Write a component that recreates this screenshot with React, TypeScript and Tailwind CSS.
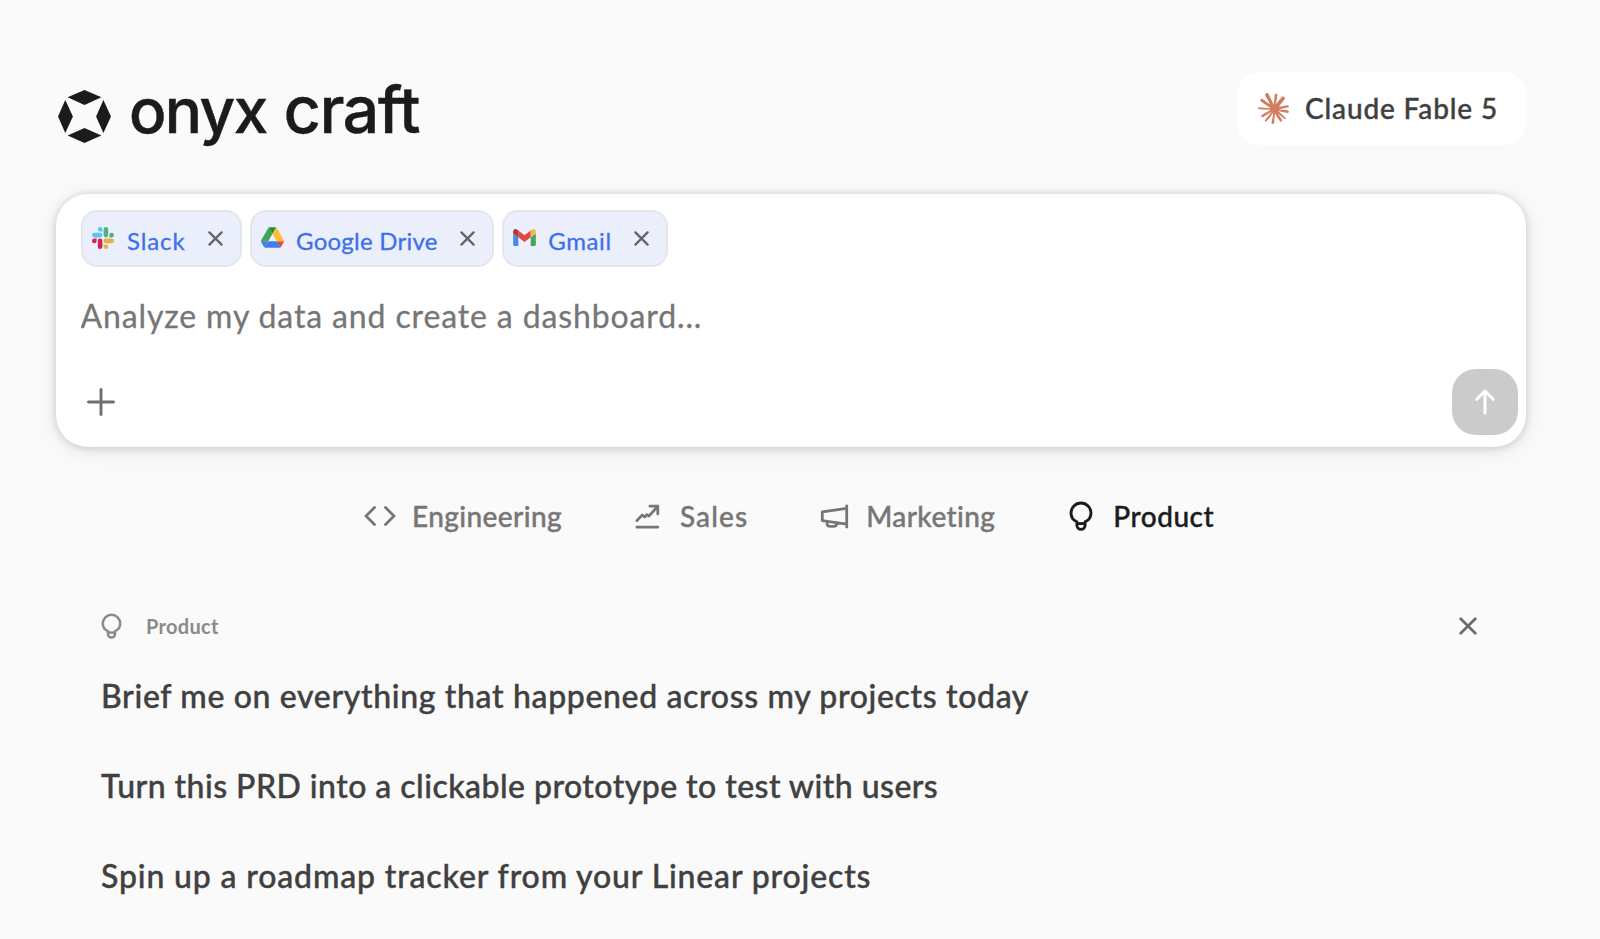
import { useState, type ReactNode } from 'react';

interface Connector {
  id: string;
  name: string;
  icon: ReactNode;
  tracking: string;
}

interface Category {
  id: string;
  label: string;
  icon: ReactNode;
  tracking: string;
}

function OnyxLogo() {
  return (
    <svg viewBox="54 59 160 160" className="w-[53px] h-[53px] shrink-0" fill="#1b1b1b">
      <path d="M134 59 185 81 134 104 83 81Z" />
      <path d="M191 89 214 139 191 189 169 139Z" />
      <path d="M134 174 185 196 134 219 83 196Z" />
      <path d="M76 89 99 139 76 189 54 139Z" />
    </svg>
  );
}

function ClaudeIcon() {
  return (
    <svg viewBox="0 0 24 24" className="w-[31px] h-[31px] shrink-0" fill="#d27d5f">
      <path d="m4.7144 15.9555 4.7174-2.6471.079-.2307-.079-.1275h-.2307l-.7893-.0486-2.6956-.0729-2.3375-.0971-2.2646-.1214-.5707-.1215-.5343-.7042.0546-.3522.4797-.3218.686.0608 1.5179.1032 2.2767.1578 1.6514.0972 2.4468.255h.3886l.0546-.1579-.1336-.0971-.1032-.0972L6.973 9.8356l-2.55-1.6879-1.3356-.9714-.7225-.4918-.3643-.4614-.1578-1.0078.6557-.7225.8803.0607.2246.0607.8925.686 1.9064 1.4754 2.4893 1.8336.3643.3035.1457-.1032.0182-.0728-.164-.2733-1.3539-2.4467-1.445-2.4893-.6435-1.032-.17-.6194c-.0607-.255-.1032-.4674-.1032-.7285L6.287.1335 6.6997 0l.9957.1336.419.3642.6192 1.4147 1.0018 2.2282 1.5543 3.0296.4553.8985.2429.8318.091.255h.1579v-.1457l.1275-1.706.2368-2.0947.2307-2.6957.0789-.7589.3764-.9107.7468-.4918.5828.2793.4797.686-.0668.4433-.2853 1.8517-.5586 2.9021-.3643 1.9429h.2125l.2429-.2429.9835-1.3053 1.6514-2.0643.7286-.8196.85-.9046.5464-.4311h1.0321l.759 1.1293-.34 1.1657-1.0625 1.3478-.8804 1.1414-1.2628 1.7-.7893 1.36.0729.1093.1882-.0183 2.8535-.607 1.5421-.2794 1.8396-.3157.8318.3886.091.3946-.3278.8075-1.967.4857-2.3072.4614-3.4364.8136-.0425.0304.0486.0607 1.5482.1457.6618.0364h1.621l3.0175.2247.7892.522.4736.6376-.079.4857-1.2142.6193-1.6393-.3886-3.825-.9107-1.3113-.3279h-.1822v.1093l1.0929 1.0686 2.0035 1.8092 2.5075 2.3314.1275.5768-.3218.4554-.34-.0486-2.2039-1.6575-.85-.7468-1.9246-1.621h-.1275v.17l.4432.6496 2.3436 3.5214.1214 1.0807-.17.3521-.6071.2125-.6679-.1214-1.3721-1.9246L14.38 17.959l-1.1414-1.9428-.1397.079-.674 7.2552-.3156.3703-.7286.2793-.6071-.4614-.3218-.7468.3218-1.4753.3886-1.9246.3157-1.53.2853-1.9004.17-.6314-.0121-.0425-.1397.0182-1.4328 1.9672-2.1796 2.9446-1.7243 1.8456-.4128.164-.7164-.3704.0667-.6618.4008-.5889 2.386-3.0357 1.4389-1.882.929-1.0868-.0062-.1579h-.0546l-6.3385 4.1164-1.1293.1457-.4857-.4554.0608-.7467.2307-.2429 1.9064-1.3114Z" />
    </svg>
  );
}

function SlackIcon() {
  return (
    <svg viewBox="0 0 24 24" className="w-[22px] h-[22px]">
      <path fill="#d1264f" d="M5.042 15.165a2.528 2.528 0 0 1-2.520 2.523A2.528 2.528 0 0 1 0 15.165a2.527 2.527 0 0 1 2.522-2.520h2.520v2.520zM6.313 15.165a2.527 2.527 0 0 1 2.521-2.520 2.527 2.527 0 0 1 2.521 2.520v6.313A2.528 2.528 0 0 1 8.834 24a2.528 2.528 0 0 1-2.521-2.522v-6.313z" />
      <path fill="#5bc3ee" d="M8.834 5.042a2.528 2.528 0 0 1-2.521-2.520A2.528 2.528 0 0 1 8.834 0a2.528 2.528 0 0 1 2.521 2.522v2.520H8.834zM8.834 6.313a2.528 2.528 0 0 1 2.521 2.521 2.528 2.528 0 0 1-2.521 2.521H2.522A2.528 2.528 0 0 1 0 8.834a2.528 2.528 0 0 1 2.522-2.521h6.312z" />
      <path fill="#52b080" d="M18.956 8.834a2.528 2.528 0 0 1 2.522-2.521A2.528 2.528 0 0 1 24 8.834a2.528 2.528 0 0 1-2.522 2.521h-2.522V8.834zM17.688 8.834a2.528 2.528 0 0 1-2.523 2.521 2.527 2.527 0 0 1-2.520-2.521V2.522A2.527 2.527 0 0 1 15.165 0a2.528 2.528 0 0 1 2.523 2.522v6.312z" />
      <path fill="#e6b04a" d="M15.165 18.956a2.528 2.528 0 0 1 2.523 2.522A2.528 2.528 0 0 1 15.165 24a2.527 2.527 0 0 1-2.520-2.522v-2.522h2.520zM15.165 17.688a2.527 2.527 0 0 1-2.520-2.523 2.526 2.526 0 0 1 2.520-2.520h6.313A2.527 2.527 0 0 1 24 15.165a2.528 2.528 0 0 1-2.522 2.523h-6.313z" />
    </svg>
  );
}

function DriveIcon() {
  return (
    <svg viewBox="0 0 87.3 78" className="w-[23px] h-[21px]">
      <path fill="#3f7de8" d="m6.600 66.850 3.850 6.650c.8 1.400 1.950 2.500 3.300 3.300l13.750-23.800h-27.500c0 1.550.4 3.100 1.200 4.500z" />
      <path fill="#43a455" d="m43.650 25-13.750-23.800c-1.350.8-2.500 1.900-3.300 3.300l-25.400 44a9.060 9.060 0 0 0-1.200 4.500h27.500z" />
      <path fill="#e5493a" d="m73.550 76.800c1.350-.8 2.500-1.900 3.300-3.300l1.600-2.750 7.650-13.250c.8-1.400 1.200-2.950 1.200-4.500h-27.502l5.852 11.500z" />
      <path fill="#2b8540" d="m43.650 25 13.750-23.800c-1.350-.8-2.900-1.200-4.500-1.200h-18.500c-1.600 0-3.150.45-4.500 1.200z" />
      <path fill="#3f7de8" d="m59.800 53h-32.300l-13.750 23.800c1.350.8 2.900 1.200 4.500 1.200h50.800c1.600 0 3.150-.45 4.500-1.200z" />
      <path fill="#fac031" d="m73.400 26.500-12.700-22c-.8-1.400-1.950-2.500-3.300-3.300l-13.750 23.800 16.150 28h27.450c0-1.550-.4-3.100-1.200-4.500z" />
    </svg>
  );
}

function GmailIcon() {
  return (
    <svg viewBox="52 42 88 66" className="w-[23px] h-[17px]">
      <path fill="#4f86ec" d="M58 108h14V74L52 59v43c0 3.320 2.690 6 6 6" />
      <path fill="#4ba45c" d="M120 108h14c3.320 0 6-2.690 6-6V59l-20 15" />
      <path fill="#f2bd42" d="M120 48v26l20-15v-8c0-7.420-8.470-11.650-14.400-7.200" />
      <path fill="#dd4b3e" d="M72 74V48l24 18 24-18v26L96 92" />
      <path fill="#b8342c" d="M52 51v8l20 15V48l-5.600-4.200c-5.940-4.450-14.400-.22-14.400 7.200" />
    </svg>
  );
}

function CloseIcon({ className }: { className?: string }) {
  return (
    <svg viewBox="0 0 16 16" className={className} fill="none" stroke="currentColor" strokeWidth="2.400" strokeLinecap="round">
      <path d="M1.500 1.500 14.500 14.500M14.500 1.500 1.500 14.500" />
    </svg>
  );
}

function BulbIcon({ className }: { className?: string }) {
  return (
    <svg viewBox="0 0 24 30" className={className} fill="none" stroke="currentColor" strokeWidth="2.900" strokeLinejoin="round">
      <path d="M7.900 20.900C4.300 19.300 2 16 2 12A10 10 0 0 1 22 12C22 16 19.700 19.300 16.100 20.900V24.300A4.100 4.100 0 0 1 7.900 24.300Z" />
      <path d="M7.900 22.600H16.100" />
    </svg>
  );
}

function CodeIcon() {
  return (
    <svg viewBox="0 0 32 22" className="w-8 h-[22px]" fill="none" stroke="currentColor" strokeWidth="2.800" strokeLinecap="round" strokeLinejoin="round">
      <path d="M10.500 2.500 2 11 10.500 19.500M21.500 2.500 30 11 21.500 19.500" />
    </svg>
  );
}

function ChartIcon() {
  return (
    <svg viewBox="0 0 26 26" className="w-[25px] h-[25px]" fill="none" stroke="currentColor" strokeWidth="2.900" strokeLinecap="round" strokeLinejoin="round">
      <path d="M2 17.300 7.500 11.500 10 13.500 12.500 11 14.500 12.500 23.500 2.700M15.500 2.300H23.700V10.300M2 24H23.700" />
    </svg>
  );
}

function MegaphoneIcon() {
  return (
    <svg viewBox="0 0 30 26" className="w-[29px] h-[25px]" fill="none" stroke="currentColor" strokeWidth="2.900" strokeLinecap="round" strokeLinejoin="round">
      <path d="M27.700 2V24M27.700 4.500 2.300 8.200V17.200L27.700 20.900M7.300 18V20.200Q7.300 23.300 10.400 23.300H13.800Q17.300 23.300 17.300 20.200V19.500" />
    </svg>
  );
}

const connectors: Connector[] = [
  { id: 'slack', name: 'Slack', icon: <SlackIcon />, tracking: 'tracking-[0.9px]' },
  { id: 'drive', name: 'Google Drive', icon: <DriveIcon />, tracking: 'tracking-[0.25px]' },
  { id: 'gmail', name: 'Gmail', icon: <GmailIcon />, tracking: 'tracking-[0.6px]' },
];

const categories: Category[] = [
  { id: 'engineering', label: 'Engineering', icon: <CodeIcon />, tracking: 'tracking-[0.4px]' },
  { id: 'sales', label: 'Sales', icon: <ChartIcon />, tracking: 'tracking-[1.1px]' },
  { id: 'marketing', label: 'Marketing', icon: <MegaphoneIcon />, tracking: 'tracking-[0.4px]' },
  { id: 'product', label: 'Product', icon: <BulbIcon className="w-6 h-[30px]" />, tracking: 'tracking-[0.5px]' },
];

const prompts = [
  { text: 'Brief me on everything that happened across my projects today', tracking: 'tracking-[0.64px]' },
  { text: 'Turn this PRD into a clickable prototype to test with users', tracking: 'tracking-[0.45px]' },
  { text: 'Spin up a roadmap tracker from your Linear projects', tracking: 'tracking-[0.84px]' },
];

export default function App() {
  const [active, setActive] = useState('product');
  const [attached, setAttached] = useState(connectors);
  const [message, setMessage] = useState('');

  return (
    <div className="h-[939px] w-[1600px] overflow-hidden bg-[#fafafa] pt-[72px] pl-14 pr-[74px] font-[Lato,sans-serif]">
      <header className="flex h-[73px] items-start justify-between">
        <div className="flex items-start pt-[18px] pl-[2px]">
          <OnyxLogo />
          <h1 className="-mt-[20px] ml-[18px] flex items-baseline font-[Inter,sans-serif] font-medium leading-[80px] text-[#1b1b1b]">
            <span className="text-[62px] tracking-[-1.6px] [-webkit-text-stroke:0.5px]">onyx</span>
            <span className="ml-[17px] text-[65px] tracking-[-1.7px] [-webkit-text-stroke:0.3px]">craft</span>
          </h1>
        </div>
        <button className="flex h-[73px] items-center rounded-[22px] bg-white pl-[21px] pr-[28px] text-[28px] font-medium text-[#3f3f3f]">
          <ClaudeIcon />
          <span className="-mt-[2px] ml-4 tracking-[0.85px] [-webkit-text-stroke:0.4px]">Claude Fable 5</span>
        </button>
      </header>

      <section className="mt-[49px] flex h-[253px] flex-col rounded-[32px] bg-white pt-4 pr-2 pb-3 pl-[24.5px] shadow-[0_4px_24px_rgba(0,0,0,0.08),0_1px_9px_rgba(0,0,0,0.17)]">
        <div className="flex gap-2">
          {attached.map((c) => (
            <div key={c.id} className="flex h-[57px] items-center rounded-2xl border-2 border-[#e4e6ea] bg-[#eaeffb] pl-[8.5px] pr-[17px]">
              <span className="flex w-6 -translate-y-px justify-center">{c.icon}</span>
              <span className={`ml-3 mt-[4px] text-2xl text-[#3e70ea] [-webkit-text-stroke:0.3px] ${c.tracking}`}>{c.name}</span>
              <button
                onClick={() => setAttached((prev) => prev.filter((a) => a.id !== c.id))}
                aria-label={`Remove ${c.name}`}
                className="ml-[22px] text-[#636468]"
              >
                <CloseIcon className="w-[15px] h-[15px]" />
              </button>
            </div>
          ))}
        </div>
        <input
          value={message}
          onChange={(e) => setMessage(e.target.value)}
          placeholder="Analyze my data and create a dashboard..."
          className="mt-[25px] h-12 w-full text-[32px] tracking-[0.87px] text-[#404040] [-webkit-text-stroke:0.3px] placeholder:text-[#767676] focus:outline-none"
        />
        <div className="mt-auto flex items-center justify-between">
          <button aria-label="Add" className="ml-[6.5px] text-[#6e6e6e]">
            <svg viewBox="0 0 28 28" className="w-7 h-7" fill="none" stroke="currentColor" strokeWidth="2.900" strokeLinecap="round">
              <path d="M14 1.500V26.500M1.500 14H26.500" />
            </svg>
          </button>
          <button aria-label="Send" className="flex h-[66px] w-[66px] items-center justify-center rounded-3xl bg-[#cbcbcb] text-white">
            <svg viewBox="0 0 20 26" className="w-5 h-[26px]" fill="none" stroke="currentColor" strokeWidth="3" strokeLinecap="round" strokeLinejoin="round">
              <path d="M10 24V2.500M1.800 10.200 10 2 18.200 10.200" />
            </svg>
          </button>
        </div>
      </section>

      <nav className="mt-[49px] flex h-10 items-center gap-[70px] pl-[308px]">
        {categories.map((c) => (
          <button
            key={c.id}
            onClick={() => setActive(c.id)}
            className={`flex items-center gap-4 text-[28px] font-medium leading-10 [-webkit-text-stroke:0.4px] ${c.tracking} ${active === c.id ? 'text-[#1c1c1c]' : 'text-[#767676]'}`}
          >
            <span className="flex w-8 justify-center">{c.icon}</span>
            {c.label}
          </button>
        ))}
      </nav>

      <section className="mt-[76px] pl-[45px]">
        <div className="flex h-7 items-center pr-[49px]">
          <BulbIcon className="w-[21px] h-[26px] text-[#8a8a8a]" />
          <h2 className="ml-6 text-xl font-bold tracking-[0.3px] text-[#8a8a8a]">Product</h2>
          <button aria-label="Close" className="ml-auto text-[#6a6a6a]">
            <CloseIcon className="w-[18px] h-[18px]" />
          </button>
        </div>
        <ul className="mt-[10.5px]">
          {prompts.map((p) => (
            <li key={p.text} className={`text-[32px] font-medium leading-[90px] text-[#404040] [-webkit-text-stroke:0.4px] ${p.tracking}`}>
              {p.text}
            </li>
          ))}
        </ul>
      </section>
    </div>
  );
}
